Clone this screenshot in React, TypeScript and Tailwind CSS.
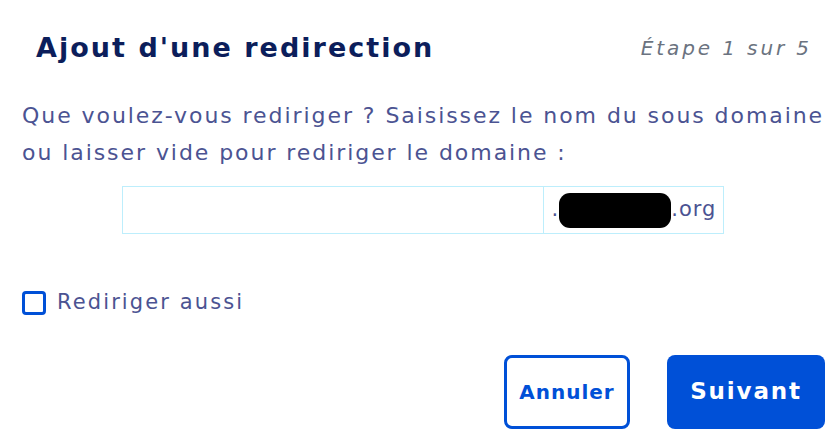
import React from "react";

export default function App() {
  return (
    <div className="w-[840px] h-[447px] bg-white overflow-hidden" style={{ fontFamily: '"DejaVu Sans", sans-serif' }}>
      <div className="flex items-center justify-between pl-[36px] pr-[28px] pt-[30px]">
        <h1 className="text-[27px] font-bold tracking-[0.075em] text-[#0c1e5b] leading-[36px]">Ajout d'une redirection</h1>
        <span className="text-[20px] italic tracking-[0.145em] text-[#6b7380] leading-[36px]">Étape 1 sur 5</span>
      </div>
      <p className="mt-[31px] pl-[22px] text-[22px] tracking-[0.088em] leading-[37px] text-[#4b5392] whitespace-nowrap">
        Que voulez-vous rediriger ? Saisissez le nom du sous domaine
        <br />
        ou laisser vide pour rediriger le domaine :
      </p>
      <div className="mt-[15px] flex justify-center pl-[5px]">
        <div className="flex w-[602px] h-[48px] border border-[#bdeefc]">
          <input className="flex-1 outline-none px-3" />
          <div className="w-[180px] border-l border-[#bdeefc] flex items-center justify-end pr-[6px] text-[21px] tracking-[0.05em] text-[#4b5392]">
            <span>.</span>
            <span className="inline-block w-[112px] h-[35px] bg-black rounded-[11px]"></span>
            <span>.org</span>
          </div>
        </div>
      </div>
      <div className="mt-[53px] pl-[22px] flex items-center gap-[11px]">
        <span className="w-[24px] h-[24px] border-[3px] border-[#0050d7] rounded-[4px]"></span>
        <span className="text-[21px] tracking-[0.1em] text-[#4b5392]">Rediriger aussi</span>
      </div>
      <div className="mt-[36px] flex justify-end gap-[37px] pr-[15px]">
        <button className="w-[126px] h-[74px] border-[3px] border-[#0050d7] rounded-[8px] text-[#0050d7] font-bold text-[20px] tracking-[0.05em]">Annuler</button>
        <button className="w-[158px] h-[74px] bg-[#0050d7] rounded-[8px] text-white font-bold text-[23px] tracking-[0.08em]">Suivant</button>
      </div>
    </div>
  );
}
